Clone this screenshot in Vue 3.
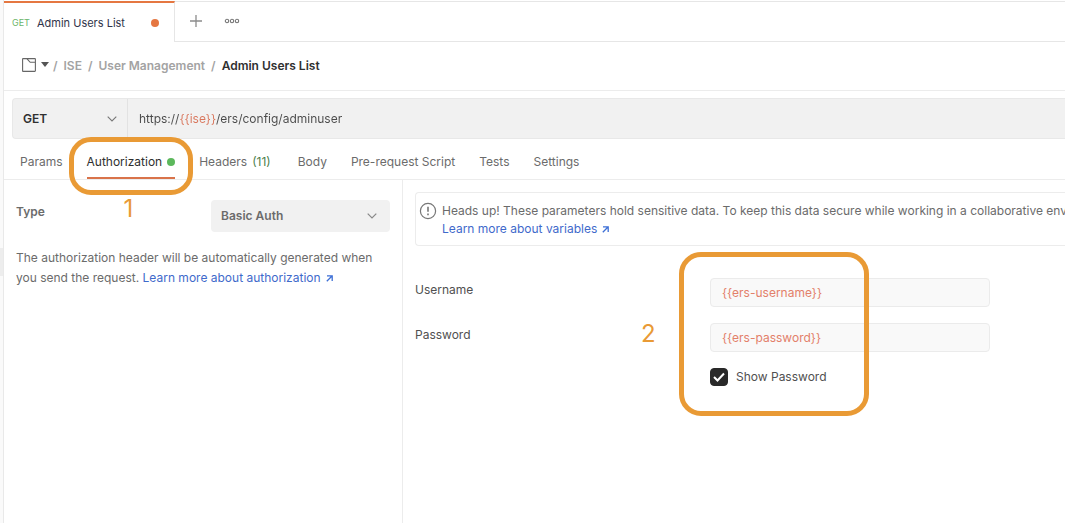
<script setup>
import { ref } from 'vue'

const method = ref('GET')
const url = ref('https://{{ise}}/ers/config/adminuser')
const authType = ref('Basic Auth')
const username = ref('{{ers-username}}')
const password = ref('{{ers-password}}')
const showPassword = ref(true)
const crumbs = ['ISE', 'User Management']
const sections = [
  { name: 'Params' },
  { name: 'Authorization', active: true },
  { name: 'Headers', count: 11 },
  { name: 'Body' },
  { name: 'Pre-request Script' },
  { name: 'Tests' },
  { name: 'Settings' },
]
</script>

<template>
  <div class="app">
    <aside class="rail"><span class="rail-handle"></span></aside>
    <main class="workspace">
      <header class="tabbar">
        <button class="file-tab" type="button">
          <span class="file-method">GET</span>
          <span class="file-name">Admin Users List</span>
          <span class="unsaved"></span>
        </button>
        <div class="tab-actions">
          <button class="icon-button" type="button" aria-label="New tab">
            <svg width="12" height="12" viewBox="0 0 12 12"><path d="M6 0v12M0 6h12" stroke="#8c8c8c" stroke-width="1.3" /></svg>
          </button>
          <button class="icon-button" type="button" aria-label="More tabs">
            <svg width="16" height="6" viewBox="0 0 16 6" fill="none" stroke="#777" stroke-width="1.1"><circle cx="3" cy="3" r="1.7" /><circle cx="8" cy="3" r="1.7" /><circle cx="13" cy="3" r="1.7" /></svg>
          </button>
        </div>
      </header>

      <nav class="crumbs" aria-label="Breadcrumb">
        <button class="icon-button collection" type="button" aria-label="Collection">
          <svg width="14" height="14" viewBox="0 0 14 14" fill="none" stroke="#666" stroke-width="1.1"><path d="M1.2.6h11.6q.6 0 .6.6v11.6q0 .6-.6.6H1.2q-.6 0-.6-.6V1.2q0-.6.6-.6zM5 .8l3.2 3.5h5" /></svg>
          <svg width="8" height="5" viewBox="0 0 8 5"><path d="M0 0h8L4 5z" fill="#555" /></svg>
        </button>
        <template v-for="crumb in crumbs" :key="crumb">
          <span class="slash">/</span>
          <a href="#">{{ crumb }}</a>
        </template>
        <span class="slash">/</span>
        <strong>Admin Users List</strong>
      </nav>

      <div class="request">
        <div class="select-wrap method">
          <select v-model="method" aria-label="Method"><option>GET</option><option>POST</option></select>
          <svg class="chevron" width="10" height="6" viewBox="0 0 10 6"><path d="M.7.7 5 5 9.3.7" fill="none" stroke="#777" stroke-width="1.1" /></svg>
        </div>
        <div class="url-box">
          <input v-model="url" class="url" type="text" aria-label="Request URL">
        </div>
      </div>

      <nav class="sections" aria-label="Request sections">
        <div v-for="s in sections" :key="s.name" class="section">
          <button type="button" :class="{ active: s.active }">
            {{ s.name }}<span v-if="s.count" class="count">({{ s.count }})</span><span v-if="s.active" class="dot"></span>
          </button>
          <div v-if="s.active" class="callout callout-tab"><span>1</span></div>
        </div>
      </nav>

      <div class="panes">
        <section class="pane auth">
          <div class="type-row">
            <label for="auth-type">Type</label>
            <div class="select-wrap type">
              <select id="auth-type" v-model="authType"><option>Basic Auth</option><option>Bearer Token</option></select>
              <svg class="chevron" width="10" height="6" viewBox="0 0 10 6"><path d="M.7.7 5 5 9.3.7" fill="none" stroke="#888" stroke-width="1.2" /></svg>
            </div>
          </div>
          <p class="help">
            The authorization header will be automatically generated when you send the request.
            <a href="#">Learn more about authorization<svg class="arrow" width="7" height="7" viewBox="0 0 7 7"><path d="M1 .8h5.200V6M6 1 .8 6.200" fill="none" stroke="#3d6fd6" stroke-width="1.3" /></svg></a>
          </p>
        </section>

        <section class="pane credentials">
          <div class="notice">
            <svg width="18" height="18" viewBox="0 0 18 18" fill="none" stroke="#777"><circle cx="9" cy="9" r="7.600" stroke-width="1.2" /><path d="M9 4.800v5M9 11.500v1.700" stroke-width="1.6" /></svg>
            <p>
              <span>Heads up! These parameters hold sensitive data. To keep this data secure while working in a collaborative environment, we recommend using variables.</span>
              <a href="#">Learn more about variables<svg class="arrow" width="7" height="7" viewBox="0 0 7 7"><path d="M1 .8h5.200V6M6 1 .8 6.200" fill="none" stroke="#3d6fd6" stroke-width="1.3" /></svg></a>
            </p>
          </div>
          <form class="fields">
            <label for="username">Username</label>
            <input id="username" v-model="username" class="text" type="text">
            <label for="password">Password</label>
            <input id="password" v-model="password" class="text" :type="showPassword ? 'text' : 'password'">
            <label class="show">
              <input v-model="showPassword" type="checkbox">
              <svg class="tick" width="18" height="18" viewBox="0 0 18 18"><path d="m4 9 3.500 3.500L14 5.500" fill="none" stroke="#fff" stroke-width="2" /></svg>
              Show Password
            </label>
            <div class="callout callout-fields"><span>2</span></div>
          </form>
        </section>
      </div>
    </main>
  </div>
</template>

<style>
body {
  background: #fff;
}
</style>

<style scoped>
* {
  box-sizing: border-box;
}
.app {
  display: flex;
  min-height: 100vh;
  overflow: hidden;
  font-family: Inter, "Liberation Sans", sans-serif;
  font-size: 12px;
  line-height: 20px;
  color: #6b6b6b;
}
button, input, select {
  margin: 0;
  padding: 0;
  border: 0;
  background: none;
  font: inherit;
  color: inherit;
  outline: none;
}
select {
  appearance: none;
  width: 100%;
  height: 100%;
}
a {
  color: #3f6acb;
  text-decoration: none;
}
svg {
  flex: none;
}
.arrow {
  margin-left: 5px;
}
.rail {
  flex: none;
  display: flex;
  align-items: center;
  width: 4px;
  background: #fafafa;
  border-right: 1px solid #e9e9e9;
}
.rail-handle {
  width: 3px;
  height: 28px;
  background: #ededed;
}
.workspace {
  flex: 1;
  min-width: 0;
  display: flex;
  flex-direction: column;
}
.tabbar {
  display: flex;
  height: 42px;
  padding-top: 1px;
  background: linear-gradient(#e6e6e6, #e6e6e6) 0 1px / 100% 1px no-repeat;
}
.file-tab {
  display: flex;
  align-items: center;
  width: 171px;
  padding: 0 15px 0 8px;
  border-top: 2px solid #e57741;
  border-right: 1px solid #e6e6e6;
  font-size: 11px;
  color: #30344a;
}
.file-method {
  width: 25px;
  text-align: left;
  font-size: 9px;
  color: #6bb56b;
}
.unsaved {
  width: 8px;
  height: 8px;
  margin-left: auto;
  border-radius: 50%;
  background: #e57741;
}
.tab-actions {
  flex: 1;
  display: flex;
  align-items: center;
  gap: 22px;
  padding-left: 15px;
  border-bottom: 1px solid #e6e6e6;
}
.icon-button {
  display: flex;
  align-items: center;
}
.crumbs {
  display: flex;
  align-items: center;
  gap: 6px;
  height: 49px;
  padding-left: 18px;
  border-bottom: 1px solid #ececec;
  font-weight: 600;
}
.crumbs a, .slash {
  color: #a3a3a3;
}
.crumbs strong {
  font-weight: 600;
  color: #303030;
}
.collection {
  gap: 5px;
  margin-right: -2px;
  padding-bottom: 3px;
}
.request {
  display: flex;
  height: 41px;
  margin: 7px 0 0 8px;
  border: 1px solid #e8e8e8;
  border-right: 0;
  border-radius: 4px 0 0 4px;
  background: #f1f1f1;
}
.select-wrap {
  position: relative;
}
.chevron {
  position: absolute;
  right: 10px;
  top: 50%;
  margin-top: -3px;
  pointer-events: none;
}
.method {
  width: 115px;
  border-right: 1px solid #e2e2e2;
}
.method select {
  padding-left: 10px;
  font-weight: 600;
  color: #303030;
}
.url-box {
  flex: 1;
  display: flex;
  padding-left: 11px;
}
/* The {{variable}} part of the URL is tinted through a clipped gradient. */
.url {
  width: 100%;
  background: linear-gradient(90deg, #4a4a4a 41px, #d9765c 41px, #d9765c 77px, #4a4a4a 77px);
  background-clip: text;
  -webkit-text-fill-color: transparent;
}
.sections {
  display: flex;
  gap: 24px;
  height: 41px;
  padding-left: 16px;
  border-bottom: 1px solid #ececec;
}
.section {
  position: relative;
  display: flex;
}
.section button {
  display: flex;
  align-items: center;
  gap: 5px;
  height: 40px;
  padding-top: 8px;
  border-bottom: 2px solid transparent;
}
.section button.active {
  color: #2f2f2f;
  border-color: #d9734a;
}
.count {
  margin-right: 3px;
  color: #4d7f4d;
}
.dot {
  width: 8px;
  height: 8px;
  border-radius: 50%;
  background: #5cb85c;
}
.callout {
  position: absolute;
  border: 5px solid #e99a35;
  pointer-events: none;
  font-size: 24px;
  line-height: 24px;
  color: #e99a35;
}
.callout span {
  position: absolute;
}
.callout-tab {
  z-index: 1;
  left: -18px;
  top: -2px;
  width: 124px;
  height: 58px;
  border-radius: 22px;
}
.callout-tab span {
  left: 50px;
  top: 55px;
}
.panes {
  flex: 1;
  display: grid;
  grid-template-columns: minmax(0, 399px) 1fr;
}
.pane {
  min-width: 0;
}
.auth {
  padding: 20px 12px;
  border-right: 1px solid #ececec;
}
.type-row {
  display: flex;
  justify-content: space-between;
  font-weight: 600;
}
.type-row label {
  line-height: 24px;
}
.type {
  width: 179px;
  height: 32px;
  border-radius: 4px;
  background: #f1f1f1;
}
.type select {
  padding-left: 10px;
}
.type .chevron {
  right: 13px;
}
.help {
  margin: 16px 0 0;
}
.credentials {
  padding: 12px 0 0 12px;
  overflow: hidden;
}
.notice {
  display: flex;
  gap: 5px;
  height: 54px;
  padding: 9px 0 0 3px;
  border: 1px solid #ececec;
  border-right: 0;
  border-radius: 4px 0 0 4px;
  line-height: 18px;
}
.notice p {
  margin: 0;
  white-space: nowrap;
}
.notice span {
  display: block;
}
.fields {
  position: relative;
  display: grid;
  grid-template-columns: 295px 280px;
  row-gap: 16px;
  padding-top: 32px;
  color: #505050;
}
.fields > label {
  line-height: 23px;
}
.text {
  height: 29px;
  padding: 0 11px;
  border: 1px solid #ebebeb;
  border-radius: 4px;
  background: #f9f9f9;
  color: #e3806a;
}
.fields > .show {
  grid-column: 2;
  position: relative;
  display: flex;
  align-items: center;
  gap: 8px;
  line-height: 18px;
}
.show input {
  appearance: none;
  width: 18px;
  height: 18px;
  border-radius: 4px;
  border: 1px solid #292929;
}
.show input:checked {
  background: #292929;
}
.tick {
  position: absolute;
  left: 0;
  pointer-events: none;
}
.callout-fields {
  left: 264px;
  top: 6px;
  width: 190px;
  height: 164px;
  border-radius: 22px;
}
.callout-fields span {
  left: -43px;
  top: 65px;
}
</style>
